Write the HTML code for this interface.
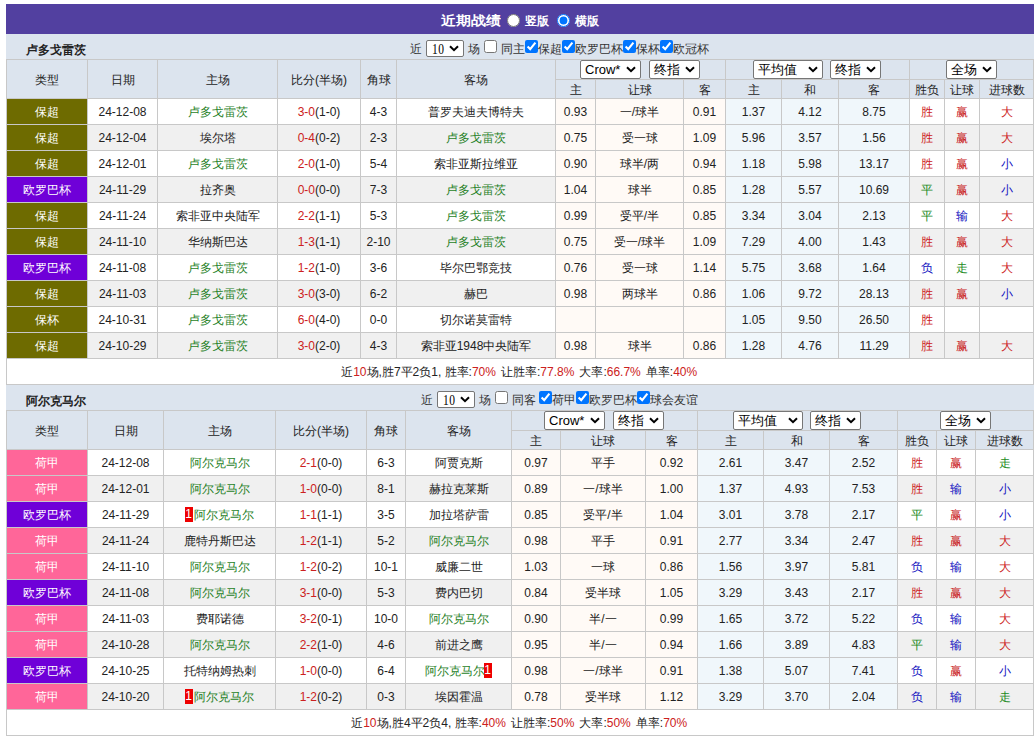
<!DOCTYPE html>
<html><head><meta charset="utf-8"><style>
html,body{margin:0;padding:0;background:#fff;}
body{position:relative;font-family:"Liberation Sans",sans-serif;font-size:12px;color:#222;width:1034px;height:736px;overflow:hidden;}
.wrap{position:absolute;left:6px;top:4px;width:1028px;}
.top{height:30px;background:#5240a0;}
.tb{border-collapse:collapse;table-layout:fixed;width:1027px;}
.tb td{line-height:16px;border:1px solid #c8c8c8;text-align:center;padding:0;height:25px;white-space:nowrap;overflow:hidden;}
.ttl td{background:#dce4ee;height:25px;padding:0;border-top:none;border-left-color:#dce4ee;border-right-color:#dce4ee;}
.hd td{background:#dce4ee;height:19px;padding:0;}
.hd2 td{background:#dce4ee;height:16px;padding:2px 0 0 0;}
.tb td.n{padding-top:0;height:25px;}
.tb td.rs{padding-top:2px;height:auto;}
.alt td{background:#f0f0f0;}
td.od,.alt td.od{background:#fffaf6;}
td.av,.alt td.av{background:#f0f7fb;}
td.lg1,.alt td.lg1{background:#6e6b00;color:#fff;}
td.lg2,.alt td.lg2{background:#6f00d8;color:#fff;}
td.lg3,.alt td.lg3{background:#ff6699;color:#fff;}
.g{color:#1f7f1f;}
.r{color:#cc2020;}
.r2{color:#c81818;}
.gr{color:#1a8a1a;}
.b{color:#1010c0;}
.rc{font-style:normal;background:#e00;color:#fff;display:inline-block;width:8px;height:15px;line-height:15px;text-align:center;font-size:12px;vertical-align:top;margin-top:0;position:relative;left:-1px;}
.pc{font-style:normal;letter-spacing:1.7px;}
.sum td{background:#fff;height:25px;}
.t12,.ttop,.tsub,.tname{position:absolute;white-space:nowrap;line-height:20px;}
.t12{font-size:12px;color:#333;}
.tname{font-size:12px;font-weight:bold;color:#222;}
.ttop{font-size:15px;font-weight:bold;color:#fff;line-height:30px;transform:scaleY(0.87);transform-origin:0 26px;}
.tsub{font-size:12px;font-weight:bold;color:#fff;line-height:30px;}
.sel{position:absolute;box-sizing:border-box;border:1px solid #767676;border-radius:2px;background:#fff;color:#000;font-size:13px;}
.sel .st{position:absolute;left:4px;top:0;line-height:17px;white-space:nowrap;}
.s10 .st{font-family:"Liberation Serif",serif;letter-spacing:0.6px;font-size:14px;left:5px;line-height:17px;transform:scaleX(0.82);transform-origin:0 0;}
.sel.s10 .chev{top:4px;}
.sel .chev{position:absolute;right:4px;top:5px;}
.cb{position:absolute;margin:0;width:13px;height:13px;}
.rd{position:absolute;margin:0;width:13px;height:13px;}

</style></head><body>
<div class="wrap">
<div class="top"></div>
<table class="tb">
<colgroup><col style="width:81px"><col style="width:70px"><col style="width:120px"><col style="width:83px"><col style="width:36px"><col style="width:159px"><col style="width:40px"><col style="width:88px"><col style="width:42px"><col style="width:56px"><col style="width:57px"><col style="width:71px"><col style="width:35px"><col style="width:35px"><col style="width:54px"></colgroup>
<tr class="ttl"><td colspan="15"></td></tr>
<tr class="hd"><td rowspan="2" class="rs">类型</td><td rowspan="2" class="rs">日期</td><td rowspan="2" class="rs">主场</td><td rowspan="2" class="rs">比分(半场)</td><td rowspan="2" class="rs">角球</td><td rowspan="2" class="rs">客场</td><td colspan="3" class="sc"></td><td colspan="3" class="sc"></td><td colspan="3" class="sc"></td></tr>
<tr class="hd2"><td>主</td><td>让球</td><td>客</td><td>主</td><td>和</td><td>客</td><td>胜负</td><td>让球</td><td>进球数</td></tr>
<tr><td class="lg1">保超</td><td class="n">24-12-08</td><td class="g">卢多戈雷茨</td><td class="n"><span class="r">3-0</span>(1-0)</td><td class="n">4-3</td><td class="">普罗夫迪夫博特夫</td><td class="od n">0.93</td><td class="od">一/球半</td><td class="od n">0.91</td><td class="av n">1.37</td><td class="av n">4.12</td><td class="av n">8.75</td><td class="r">胜</td><td class="r2">赢</td><td class="r">大</td></tr>
<tr class="alt"><td class="lg1">保超</td><td class="n">24-12-04</td><td class="">埃尔塔</td><td class="n"><span class="r">0-4</span>(0-2)</td><td class="n">2-3</td><td class="g">卢多戈雷茨</td><td class="od n">0.75</td><td class="od">受一球</td><td class="od n">1.09</td><td class="av n">5.96</td><td class="av n">3.57</td><td class="av n">1.56</td><td class="r">胜</td><td class="r2">赢</td><td class="r">大</td></tr>
<tr><td class="lg1">保超</td><td class="n">24-12-01</td><td class="g">卢多戈雷茨</td><td class="n"><span class="r">2-0</span>(1-0)</td><td class="n">5-4</td><td class="">索非亚斯拉维亚</td><td class="od n">0.90</td><td class="od">球半/两</td><td class="od n">0.94</td><td class="av n">1.18</td><td class="av n">5.98</td><td class="av n">13.17</td><td class="r">胜</td><td class="r2">赢</td><td class="b">小</td></tr>
<tr class="alt"><td class="lg2">欧罗巴杯</td><td class="n">24-11-29</td><td class="">拉齐奥</td><td class="n"><span class="r">0-0</span>(0-0)</td><td class="n">7-3</td><td class="g">卢多戈雷茨</td><td class="od n">1.04</td><td class="od">球半</td><td class="od n">0.85</td><td class="av n">1.28</td><td class="av n">5.57</td><td class="av n">10.69</td><td class="gr">平</td><td class="r2">赢</td><td class="b">小</td></tr>
<tr><td class="lg1">保超</td><td class="n">24-11-24</td><td class="">索非亚中央陆军</td><td class="n"><span class="r">2-2</span>(1-1)</td><td class="n">5-3</td><td class="g">卢多戈雷茨</td><td class="od n">0.99</td><td class="od">受平/半</td><td class="od n">0.85</td><td class="av n">3.34</td><td class="av n">3.04</td><td class="av n">2.13</td><td class="gr">平</td><td class="b">输</td><td class="r">大</td></tr>
<tr class="alt"><td class="lg1">保超</td><td class="n">24-11-10</td><td class="">华纳斯巴达</td><td class="n"><span class="r">1-3</span>(1-1)</td><td class="n">2-10</td><td class="g">卢多戈雷茨</td><td class="od n">0.75</td><td class="od">受一/球半</td><td class="od n">1.09</td><td class="av n">7.29</td><td class="av n">4.00</td><td class="av n">1.43</td><td class="r">胜</td><td class="r2">赢</td><td class="r">大</td></tr>
<tr><td class="lg2">欧罗巴杯</td><td class="n">24-11-08</td><td class="g">卢多戈雷茨</td><td class="n"><span class="r">1-2</span>(1-0)</td><td class="n">3-6</td><td class="">毕尔巴鄂竞技</td><td class="od n">0.76</td><td class="od">受一球</td><td class="od n">1.14</td><td class="av n">5.75</td><td class="av n">3.68</td><td class="av n">1.64</td><td class="b">负</td><td class="gr">走</td><td class="r">大</td></tr>
<tr class="alt"><td class="lg1">保超</td><td class="n">24-11-03</td><td class="g">卢多戈雷茨</td><td class="n"><span class="r">3-0</span>(3-0)</td><td class="n">6-2</td><td class="">赫巴</td><td class="od n">0.98</td><td class="od">两球半</td><td class="od n">0.86</td><td class="av n">1.06</td><td class="av n">9.72</td><td class="av n">28.13</td><td class="r">胜</td><td class="r2">赢</td><td class="b">小</td></tr>
<tr><td class="lg1">保杯</td><td class="n">24-10-31</td><td class="g">卢多戈雷茨</td><td class="n"><span class="r">6-0</span>(4-0)</td><td class="n">0-0</td><td class="">切尔诺莫雷特</td><td class="od n"></td><td class="od"></td><td class="od n"></td><td class="av n">1.05</td><td class="av n">9.50</td><td class="av n">26.50</td><td class="r">胜</td><td class=""></td><td class=""></td></tr>
<tr class="alt"><td class="lg1">保超</td><td class="n">24-10-29</td><td class="g">卢多戈雷茨</td><td class="n"><span class="r">3-0</span>(2-0)</td><td class="n">4-3</td><td class="">索非亚1948中央陆军</td><td class="od n">0.98</td><td class="od">球半</td><td class="od n">0.86</td><td class="av n">1.28</td><td class="av n">4.76</td><td class="av n">11.29</td><td class="r">胜</td><td class="r2">赢</td><td class="r">大</td></tr>
<tr class="sum"><td colspan="15">近<span class="r">10</span>场,胜7平2负1, 胜率:<span class="r">70<i class="pc">%</i></span> 让胜率:<span class="r">77.8<i class="pc">%</i></span> 大率:<span class="r">66.7<i class="pc">%</i></span> 单率:<span class="r">40<i class="pc">%</i></span></td></tr>
</table>
<table class="tb">
<colgroup><col style="width:81px"><col style="width:76px"><col style="width:112px"><col style="width:91px"><col style="width:39px"><col style="width:106px"><col style="width:49px"><col style="width:85px"><col style="width:52px"><col style="width:66px"><col style="width:66px"><col style="width:68px"><col style="width:39px"><col style="width:39px"><col style="width:58px"></colgroup>
<tr class="ttl"><td colspan="15"></td></tr>
<tr class="hd"><td rowspan="2" class="rs">类型</td><td rowspan="2" class="rs">日期</td><td rowspan="2" class="rs">主场</td><td rowspan="2" class="rs">比分(半场)</td><td rowspan="2" class="rs">角球</td><td rowspan="2" class="rs">客场</td><td colspan="3" class="sc"></td><td colspan="3" class="sc"></td><td colspan="3" class="sc"></td></tr>
<tr class="hd2"><td>主</td><td>让球</td><td>客</td><td>主</td><td>和</td><td>客</td><td>胜负</td><td>让球</td><td>进球数</td></tr>
<tr><td class="lg3">荷甲</td><td class="n">24-12-08</td><td class="g">阿尔克马尔</td><td class="n"><span class="r">2-1</span>(0-0)</td><td class="n">6-3</td><td class="">阿贾克斯</td><td class="od n">0.97</td><td class="od">平手</td><td class="od n">0.92</td><td class="av n">2.61</td><td class="av n">3.47</td><td class="av n">2.52</td><td class="r">胜</td><td class="r2">赢</td><td class="gr">走</td></tr>
<tr class="alt"><td class="lg3">荷甲</td><td class="n">24-12-01</td><td class="g">阿尔克马尔</td><td class="n"><span class="r">1-0</span>(0-0)</td><td class="n">8-1</td><td class="">赫拉克莱斯</td><td class="od n">0.89</td><td class="od">一/球半</td><td class="od n">1.00</td><td class="av n">1.37</td><td class="av n">4.93</td><td class="av n">7.53</td><td class="r">胜</td><td class="b">输</td><td class="b">小</td></tr>
<tr><td class="lg2">欧罗巴杯</td><td class="n">24-11-29</td><td class="g"><i class="rc">1</i>阿尔克马尔</td><td class="n"><span class="r">1-1</span>(1-1)</td><td class="n">3-5</td><td class="">加拉塔萨雷</td><td class="od n">0.85</td><td class="od">受平/半</td><td class="od n">1.04</td><td class="av n">3.01</td><td class="av n">3.78</td><td class="av n">2.17</td><td class="gr">平</td><td class="r2">赢</td><td class="b">小</td></tr>
<tr class="alt"><td class="lg3">荷甲</td><td class="n">24-11-24</td><td class="">鹿特丹斯巴达</td><td class="n"><span class="r">1-2</span>(1-1)</td><td class="n">5-2</td><td class="g">阿尔克马尔</td><td class="od n">0.98</td><td class="od">平手</td><td class="od n">0.91</td><td class="av n">2.77</td><td class="av n">3.34</td><td class="av n">2.47</td><td class="r">胜</td><td class="r2">赢</td><td class="r">大</td></tr>
<tr><td class="lg3">荷甲</td><td class="n">24-11-10</td><td class="g">阿尔克马尔</td><td class="n"><span class="r">1-2</span>(0-2)</td><td class="n">10-1</td><td class="">威廉二世</td><td class="od n">1.03</td><td class="od">一球</td><td class="od n">0.86</td><td class="av n">1.56</td><td class="av n">3.97</td><td class="av n">5.81</td><td class="b">负</td><td class="b">输</td><td class="r">大</td></tr>
<tr class="alt"><td class="lg2">欧罗巴杯</td><td class="n">24-11-08</td><td class="g">阿尔克马尔</td><td class="n"><span class="r">3-1</span>(0-0)</td><td class="n">5-3</td><td class="">费内巴切</td><td class="od n">0.84</td><td class="od">受半球</td><td class="od n">1.05</td><td class="av n">3.29</td><td class="av n">3.43</td><td class="av n">2.17</td><td class="r">胜</td><td class="r2">赢</td><td class="r">大</td></tr>
<tr><td class="lg3">荷甲</td><td class="n">24-11-03</td><td class="">费耶诺德</td><td class="n"><span class="r">3-2</span>(0-1)</td><td class="n">10-0</td><td class="g">阿尔克马尔</td><td class="od n">0.90</td><td class="od">半/一</td><td class="od n">0.99</td><td class="av n">1.65</td><td class="av n">3.72</td><td class="av n">5.22</td><td class="b">负</td><td class="b">输</td><td class="r">大</td></tr>
<tr class="alt"><td class="lg3">荷甲</td><td class="n">24-10-28</td><td class="g">阿尔克马尔</td><td class="n"><span class="r">2-2</span>(1-0)</td><td class="n">4-6</td><td class="">前进之鹰</td><td class="od n">0.95</td><td class="od">半/一</td><td class="od n">0.94</td><td class="av n">1.66</td><td class="av n">3.89</td><td class="av n">4.83</td><td class="gr">平</td><td class="b">输</td><td class="r">大</td></tr>
<tr><td class="lg2">欧罗巴杯</td><td class="n">24-10-25</td><td class="">托特纳姆热刺</td><td class="n"><span class="r">1-0</span>(0-0)</td><td class="n">6-4</td><td class="g">阿尔克马尔<i class="rc">1</i></td><td class="od n">0.98</td><td class="od">一/球半</td><td class="od n">0.91</td><td class="av n">1.38</td><td class="av n">5.07</td><td class="av n">7.41</td><td class="b">负</td><td class="r2">赢</td><td class="b">小</td></tr>
<tr class="alt"><td class="lg3">荷甲</td><td class="n">24-10-20</td><td class="g"><i class="rc">1</i>阿尔克马尔</td><td class="n"><span class="r">1-2</span>(0-2)</td><td class="n">0-3</td><td class="">埃因霍温</td><td class="od n">0.78</td><td class="od">受半球</td><td class="od n">1.12</td><td class="av n">3.29</td><td class="av n">3.70</td><td class="av n">2.04</td><td class="b">负</td><td class="b">输</td><td class="gr">走</td></tr>
<tr class="sum"><td colspan="15">近<span class="r">10</span>场,胜4平2负4, 胜率:<span class="r">40<i class="pc">%</i></span> 让胜率:<span class="r">50<i class="pc">%</i></span> 大率:<span class="r">50<i class="pc">%</i></span> 单率:<span class="r">70<i class="pc">%</i></span></td></tr>
</table>
</div>
<span class="ttop" style="left:441px;top:4px">近期战绩</span><input type="radio" class="rd" style="left:507px;top:14px"><span class="tsub" style="left:524.5px;top:6px">竖版</span><input type="radio" class="rd" style="left:557px;top:14px" checked><span class="tsub" style="left:574.5px;top:6px">横版</span><span class="tname" style="left:26px;top:40px">卢多戈雷茨</span><span class="t12" style="left:410px;top:39px">近</span><div class="sel s10" style="left:426px;top:40px;width:38px;height:17px"><span class="st">10</span><svg class="chev" width="10" height="7" viewBox="0 0 10 7"><path d="M1 1.2 L5 5.2 L9 1.2" fill="none" stroke="#000" stroke-width="2"/></svg></div><span class="t12" style="left:468px;top:39px">场</span><input type="checkbox" class="cb" style="left:484px;top:40px"><span class="t12" style="left:501px;top:39px">同主</span><input type="checkbox" class="cb" style="left:525px;top:40px" checked><span class="t12" style="left:538px;top:39px">保超</span><input type="checkbox" class="cb" style="left:562px;top:40px" checked><span class="t12" style="left:575px;top:39px">欧罗巴杯</span><input type="checkbox" class="cb" style="left:623px;top:40px" checked><span class="t12" style="left:636px;top:39px">保杯</span><input type="checkbox" class="cb" style="left:660px;top:40px" checked><span class="t12" style="left:673px;top:39px">欧冠杯</span><span class="tname" style="left:26px;top:391px">阿尔克马尔</span><span class="t12" style="left:421px;top:390px">近</span><div class="sel s10" style="left:437px;top:391px;width:38px;height:17px"><span class="st">10</span><svg class="chev" width="10" height="7" viewBox="0 0 10 7"><path d="M1 1.2 L5 5.2 L9 1.2" fill="none" stroke="#000" stroke-width="2"/></svg></div><span class="t12" style="left:479px;top:390px">场</span><input type="checkbox" class="cb" style="left:495px;top:391px"><span class="t12" style="left:512px;top:390px">同客</span><input type="checkbox" class="cb" style="left:539px;top:391px" checked><span class="t12" style="left:552px;top:390px">荷甲</span><input type="checkbox" class="cb" style="left:576px;top:391px" checked><span class="t12" style="left:589px;top:390px">欧罗巴杯</span><input type="checkbox" class="cb" style="left:637px;top:391px" checked><span class="t12" style="left:650px;top:390px">球会友谊</span><div class="sel " style="left:580px;top:60px;width:61px;height:19px"><span class="st">Crow*</span><svg class="chev" width="10" height="7" viewBox="0 0 10 7"><path d="M1 1.2 L5 5.2 L9 1.2" fill="none" stroke="#000" stroke-width="2"/></svg></div><div class="sel " style="left:649px;top:60px;width:51px;height:19px"><span class="st">终指</span><svg class="chev" width="10" height="7" viewBox="0 0 10 7"><path d="M1 1.2 L5 5.2 L9 1.2" fill="none" stroke="#000" stroke-width="2"/></svg></div><div class="sel " style="left:753px;top:60px;width:70px;height:19px"><span class="st">平均值</span><svg class="chev" width="10" height="7" viewBox="0 0 10 7"><path d="M1 1.2 L5 5.2 L9 1.2" fill="none" stroke="#000" stroke-width="2"/></svg></div><div class="sel " style="left:830px;top:60px;width:51px;height:19px"><span class="st">终指</span><svg class="chev" width="10" height="7" viewBox="0 0 10 7"><path d="M1 1.2 L5 5.2 L9 1.2" fill="none" stroke="#000" stroke-width="2"/></svg></div><div class="sel " style="left:946px;top:60px;width:51px;height:19px"><span class="st">全场</span><svg class="chev" width="10" height="7" viewBox="0 0 10 7"><path d="M1 1.2 L5 5.2 L9 1.2" fill="none" stroke="#000" stroke-width="2"/></svg></div><div class="sel " style="left:544px;top:411px;width:61px;height:19px"><span class="st">Crow*</span><svg class="chev" width="10" height="7" viewBox="0 0 10 7"><path d="M1 1.2 L5 5.2 L9 1.2" fill="none" stroke="#000" stroke-width="2"/></svg></div><div class="sel " style="left:613px;top:411px;width:51px;height:19px"><span class="st">终指</span><svg class="chev" width="10" height="7" viewBox="0 0 10 7"><path d="M1 1.2 L5 5.2 L9 1.2" fill="none" stroke="#000" stroke-width="2"/></svg></div><div class="sel " style="left:733px;top:411px;width:70px;height:19px"><span class="st">平均值</span><svg class="chev" width="10" height="7" viewBox="0 0 10 7"><path d="M1 1.2 L5 5.2 L9 1.2" fill="none" stroke="#000" stroke-width="2"/></svg></div><div class="sel " style="left:810px;top:411px;width:51px;height:19px"><span class="st">终指</span><svg class="chev" width="10" height="7" viewBox="0 0 10 7"><path d="M1 1.2 L5 5.2 L9 1.2" fill="none" stroke="#000" stroke-width="2"/></svg></div><div class="sel " style="left:940px;top:411px;width:51px;height:19px"><span class="st">全场</span><svg class="chev" width="10" height="7" viewBox="0 0 10 7"><path d="M1 1.2 L5 5.2 L9 1.2" fill="none" stroke="#000" stroke-width="2"/></svg></div>
</body></html>
